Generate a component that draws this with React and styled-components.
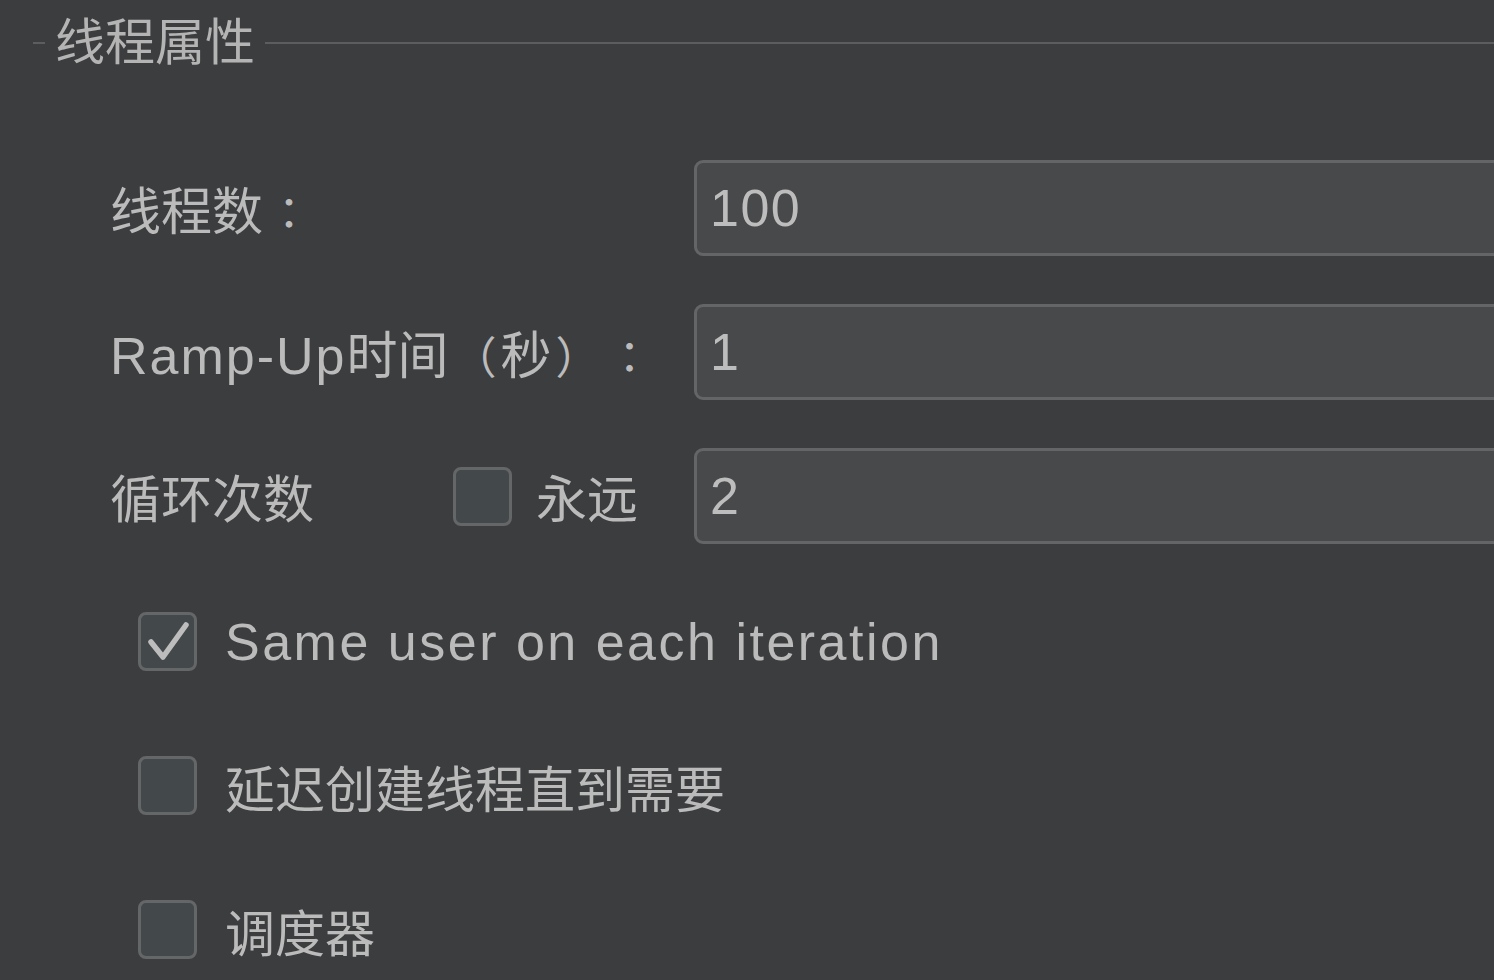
import React from "react";
import styled, { createGlobalStyle } from "styled-components";

const Global = createGlobalStyle`
  html, body { margin: 0; padding: 0; background: #3c3d3f; }
  body { font-family: "Liberation Sans", "Noto Sans CJK SC", sans-serif; color: #bbbbbb; }
`;

const Page = styled.div`
  width: 1494px;
  height: 980px;
  overflow: hidden;
  background: #3c3d3f;
  box-sizing: border-box;
  padding-top: 14px;
`;

const Legend = styled.div`
  display: flex;
  align-items: center;
  height: 58px;
  padding-left: 33px;
`;

const Dash = styled.div`
  width: ${(p) => p.$w || "auto"};
  flex: ${(p) => (p.$grow ? 1 : "none")};
  height: 2px;
  background: #5c5d5e;
`;

const Title = styled.div`
  font-size: 50px;
  color: #b4b4b4;
  padding: 0 10px;
  line-height: 58px;
`;

const Form = styled.div`
  display: flex;
  flex-direction: column;
  padding-top: 88px;
  padding-left: 110px;
`;

const FieldRow = styled.div`
  display: flex;
  align-items: center;
  height: 96px;
  margin-bottom: 48px;
`;

const LabelCell = styled.div`
  width: 584px;
  display: flex;
  align-items: center;
  font-size: 51px;
  color: #bbbbbb;
  white-space: nowrap;
`;

const Label = styled.span`
  flex: ${(p) => (p.$grow ? 1 : "none")};
`;

const Latin = styled.span`
  font-size: 52px;
  letter-spacing: ${(p) => p.$ls || "2px"};
`;

const Punct = styled.span`
  font-family: "Noto Sans CJK TC", sans-serif;
  font-size: 44px;
  display: inline-block;
  width: 52px;
  text-align: center;
`;

const Input = styled.div`
  flex: 1;
  height: 96px;
  box-sizing: border-box;
  margin-right: -40px;
  background: #48494b;
  border: 3px solid #646566;
  border-radius: 9px;
  display: flex;
  align-items: center;
  padding-left: 13px;
  font-size: 52px;
  letter-spacing: 1.5px;
  color: #bdbdbd;
`;

const Box = styled.span`
  width: 59px;
  height: 59px;
  box-sizing: border-box;
  border: 3px solid #656667;
  border-radius: 8px;
  background: #43484a;
  display: inline-flex;
  flex: none;
`;

const Checks = styled.div`
  display: flex;
  flex-direction: column;
  padding-left: 138px;
  margin-top: 20px;
`;

const CheckRow = styled.div`
  display: flex;
  align-items: center;
  height: 59px;
  margin-bottom: 85px;
  font-size: 50px;
  color: #bbbbbb;
  gap: 28px;
`;

const ForeverLabel = styled.span`
  margin-left: 24px;
  margin-right: 56px;
`;

const Check = ({ checked }) => (
  <Box>
    {checked && (
      <svg width="53" height="53" viewBox="0 0 53 53">
        <path d="M10 27 L22 42 L45 10" fill="none" stroke="#bdbdbd" strokeWidth="5.5" strokeLinecap="round" strokeLinejoin="round" />
      </svg>
    )}
  </Box>
);

export default function App() {
  return (
    <Page>
      <Global />
      <Legend>
        <Dash $w="12px" />
        <Title>线程属性</Title>
        <Dash $grow />
      </Legend>
      <Form>
        <FieldRow>
          <LabelCell><Label>线程数<Punct>：</Punct></Label></LabelCell>
          <Input>100</Input>
        </FieldRow>
        <FieldRow>
          <LabelCell>
            <Label><Latin>Ramp-Up</Latin>时间<Punct>（</Punct>秒<Punct>）</Punct><Punct>：</Punct></Label>
          </LabelCell>
          <Input>1</Input>
        </FieldRow>
        <FieldRow>
          <LabelCell>
            <Label $grow>循环次数</Label>
            <Check />
            <ForeverLabel>永远</ForeverLabel>
          </LabelCell>
          <Input>2</Input>
        </FieldRow>
      </Form>
      <Checks>
        <CheckRow><Check checked /><Latin $ls="2.5px">Same user on each iteration</Latin></CheckRow>
        <CheckRow><Check />延迟创建线程直到需要</CheckRow>
        <CheckRow><Check />调度器</CheckRow>
      </Checks>
    </Page>
  );
}
